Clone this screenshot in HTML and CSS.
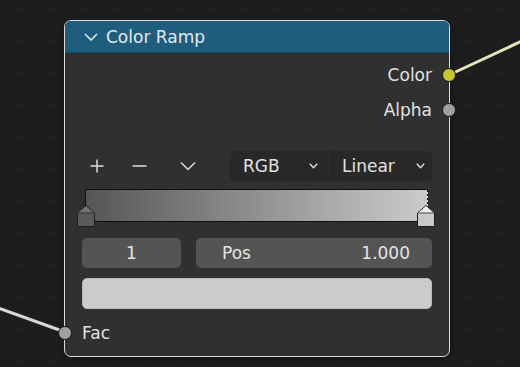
FILE: index.html
```html
<!DOCTYPE html>
<html lang="en">

<head>
    <meta charset="UTF-8">
    <meta name="viewport" content="width=device-width, initial-scale=1.0">
    <title>Color Ramp</title>
    <link rel="stylesheet" href="styles.css">
</head>

<body>
    <div class="canvas">
        <!-- links sit behind the node -->
        <svg class="links" width="520" height="367" viewBox="0 0 520 367">
            <line x1="449" y1="75" x2="522" y2="41" stroke="#e4e4b6" stroke-width="3" />
            <line x1="-2" y1="308" x2="65" y2="332" stroke="#d9d9d9" stroke-width="3" />
        </svg>

        <div class="node">
            <div class="node-header">
                <svg class="chev-head" width="14" height="8" viewBox="0 0 14 8">
                    <polyline points="1,1 7,7 13,1" fill="none" stroke="#dfe6ea" stroke-width="1.6" />
                </svg>
                <span>Color Ramp</span>
            </div>

            <div class="node-body">
                <div class="socket-row out">
                    <span>Color</span>
                    <i class="socket yellow"></i>
                </div>
                <div class="socket-row out">
                    <span>Alpha</span>
                    <i class="socket grey"></i>
                </div>

                <div class="ramp-tools">
                    <div class="tool-btns">
                        <svg width="14" height="14" viewBox="0 0 14 14">
                            <path d="M7 0.5V13.5M0.5 7H13.5" stroke="#dcdcdc" stroke-width="1.5" />
                        </svg>
                        <svg width="15" height="14" viewBox="0 0 15 14">
                            <path d="M0.5 7H14.5" stroke="#dcdcdc" stroke-width="1.5" />
                        </svg>
                        <svg width="16" height="14" viewBox="0 0 16 14">
                            <polyline points="1,3.5 8,10.5 15,3.5" fill="none" stroke="#dcdcdc" stroke-width="1.5" />
                        </svg>
                    </div>
                    <div class="dropdowns">
                        <div class="dd">
                            <span>RGB</span>
                            <svg width="9" height="6" viewBox="0 0 9 6">
                                <polyline points="0.8,0.8 4.5,4.8 8.2,0.8" fill="none" stroke="#dcdcdc" stroke-width="1.4" />
                            </svg>
                        </div>
                        <div class="dd">
                            <span>Linear</span>
                            <svg width="9" height="6" viewBox="0 0 9 6">
                                <polyline points="0.8,0.8 4.5,4.8 8.2,0.8" fill="none" stroke="#dcdcdc" stroke-width="1.4" />
                            </svg>
                        </div>
                    </div>
                </div>

                <div class="ramp">
                    <div class="ramp-bar"></div>
                    <span class="stop-line"></span>
                    <svg class="handle left" width="18" height="22" viewBox="0 0 18 22">
                        <polygon points="0.5,8 9,0.5 17.5,8 17.5,21.5 0.5,21.5" fill="#5a5a5a" stroke="#1e1e1e" />
                        <polygon points="1.5,7.6 9,1.2 16.5,7.6" fill="#747474" />
                        <line x1="1" y1="8" x2="17" y2="8" stroke="#3a3a3a" />
                    </svg>
                    <svg class="handle right" width="18" height="22" viewBox="0 0 18 22">
                        <polygon points="0.5,8 9,0.5 17.5,8 17.5,21.5 0.5,21.5" fill="#c9c9c9" stroke="#1e1e1e" />
                        <polygon points="1.5,7.6 9,1.2 16.5,7.6" fill="#ececec" />
                        <line x1="1" y1="8" x2="17" y2="8" stroke="#555" />
                    </svg>
                </div>

                <div class="fields">
                    <div class="field idx">1</div>
                    <div class="field pos">
                        <span>Pos</span>
                        <span>1.000</span>
                    </div>
                </div>

                <div class="swatch"></div>

                <div class="socket-row in">
                    <i class="socket grey"></i>
                    <span>Fac</span>
                </div>
            </div>
        </div>
    </div>
</body>

</html>
```

FILE: styles.css
```css
* {
    margin: 0;
    padding: 0;
    box-sizing: border-box;
}

body {
    background: #1d1d1d;
    font-family: "DejaVu Sans", "Liberation Sans", sans-serif;
    font-size: 17px;
    color: #e2e2e2;
}

.canvas {
    position: relative;
    width: 520px;
    height: 367px;
    overflow: hidden;
    background-color: #1d1d1d;
    background-image: radial-gradient(circle, #292929 1px, transparent 1.6px);
    background-size: 32px 32px;
    background-position: 3px 25px;
}

.links {
    position: absolute;
    left: 0;
    top: 0;
}

/* node placed on the canvas */
.node {
    position: absolute;
    left: 64px;
    top: 20px;
    width: 386px;
    height: 337px;
    border: 1px solid #dcdcdc;
    border-radius: 7px;
    background: #303030;
    box-shadow: 0 2px 6px rgba(0, 0, 0, .35);
}

.node-header {
    height: 32px;
    display: flex;
    align-items: center;
    gap: 8px;
    padding-left: 19px;
    background: #1f5d7e;
    border-bottom: 1px solid #1a4863;
    border-radius: 6px 6px 0 0;
    color: #e3e8ec;
}

.chev-head {
    margin-top: 1px;
}

.node-body {
    display: flex;
    flex-direction: column;
    padding: 10px 17px 0 17px;
}

.socket-row {
    position: relative;
    height: 24px;
    display: flex;
    align-items: center;
}

.socket-row.out {
    justify-content: flex-end;
}

.socket-row.out + .socket-row.out {
    margin-top: 11px;
}

.socket {
    position: absolute;
    top: 5px;
    width: 14px;
    height: 14px;
    border-radius: 50%;
    border: 1px solid #151515;
}

.socket-row.out .socket {
    right: -24px;
}

.socket-row.in .socket {
    left: -24px;
}

.socket.yellow {
    background: #c7c72a;
}

.socket.grey {
    background: #a1a1a1;
}

.ramp-tools {
    margin-top: 29px;
    height: 30px;
    display: flex;
    align-items: center;
    justify-content: space-between;
}

.tool-btns {
    display: flex;
    align-items: center;
    gap: 28px;
    padding-left: 8px;
}

.tool-btns svg:last-child {
    margin-left: 5px;
}

.dropdowns {
    width: 202px;
    height: 30px;
    display: flex;
    background: #282828;
    border-radius: 5px;
}

.dd {
    display: flex;
    align-items: center;
    justify-content: space-between;
}

.dd:first-child {
    width: 99px;
    padding: 0 10px 0 13px;
    border-right: 1px solid #2f2f2f;
}

.dd:last-child {
    flex: 1;
    padding: 0 7px 0 13px;
}

.ramp {
    position: relative;
    margin-top: 8px;
    height: 33px;
}

.ramp-bar {
    margin: 0 4px 0 3px;
    height: 33px;
    border: 1px solid #0e0e0e;
    background: linear-gradient(to right, #565656, #cbcbcb);
}

.stop-line {
    position: absolute;
    top: 1px;
    right: 4px;
    width: 1px;
    height: 16px;
    background: repeating-linear-gradient(to bottom, #111 0 2px, #ddd 2px 4px);
}

.handle {
    position: absolute;
    top: 16px;
}

.handle.left {
    left: -5px;
}

.handle.right {
    right: -3px;
}

.fields {
    margin-top: 16px;
    display: flex;
    gap: 15px;
}

.field {
    height: 30px;
    display: flex;
    align-items: center;
    background: #545454;
    border-radius: 5px;
    color: #e4e4e4;
}

.field.idx {
    width: 99px;
    justify-content: center;
}

.field.pos {
    flex: 1;
    justify-content: space-between;
    padding: 0 22px 0 26px;
}

.swatch {
    margin-top: 10px;
    height: 31px;
    background: #cbcbcb;
    border: 1px solid #bababa;
    border-radius: 5px;
}

.socket-row.in {
    margin-top: 12px;
}
```
